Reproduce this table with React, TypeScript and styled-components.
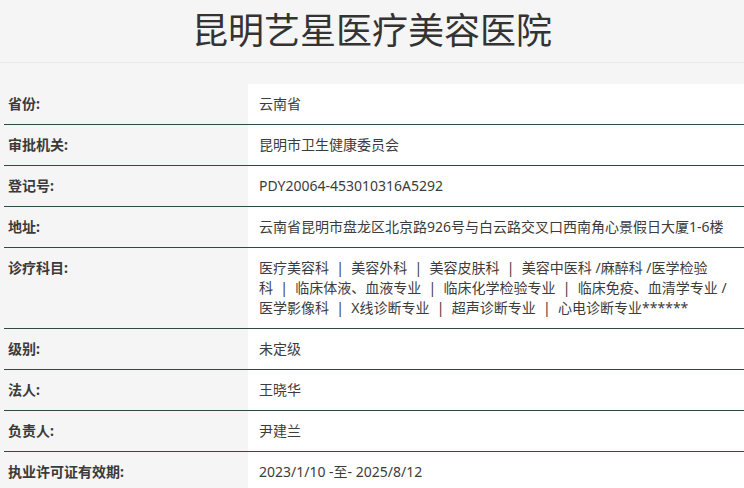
import React from "react";
import styled, { createGlobalStyle } from "styled-components";

const Global = createGlobalStyle`
  html, body { margin: 0; padding: 0; }
  body {
    background: #f5f5f5;
    font-family: "Noto Sans", "Noto Sans CJK SC", sans-serif;
    color: #333;
  }
`;

const Page = styled.div`
  width: 744px;
  height: 488px;
  overflow: hidden;
  background: #f5f5f5;
`;

const Header = styled.header`
  height: 62px;
  border-bottom: 1px solid #e9e9e9;
  display: flex;
  justify-content: center;
  align-items: flex-start;
`;

const Title = styled.h1`
  margin: 0;
  font-family: "Noto Sans CJK SC", sans-serif;
  font-weight: 400;
  font-size: 36px;
  line-height: 56px;
  color: #333;
  letter-spacing: 0;
`;

const Table = styled.div`
  margin: 21px 0 0 4px;
  display: flex;
  flex-direction: column;
`;

const Row = styled.div`
  display: grid;
  grid-template-columns: 244px 1fr;
  border-bottom: 1px solid #2e4a42;
`;

const Label = styled.div`
  background: #f5f5f5;
  padding: 10px 4px;
  font-size: 14px;
  line-height: 20px;
  font-weight: 700;
  color: #3a3a3a;
`;

const Value = styled.div`
  background: #fff;
  padding: 10px 11px;
  font-size: 14px;
  line-height: 20px;
  color: #3c3c3c;
  white-space: nowrap;
`;

const Line = styled.span`
  display: block;
`;

const rows: { label: string; value: string[] }[] = [
  { label: "省份:", value: ["云南省"] },
  { label: "审批机关:", value: ["昆明市卫生健康委员会"] },
  { label: "登记号:", value: ["PDY20064-453010316A5292"] },
  { label: "地址:", value: ["云南省昆明市盘龙区北京路926号与白云路交叉口西南角心景假日大厦1-6楼"] },
  {
    label: "诊疗科目:",
    value: [
      "医疗美容科 \u00a0|\u00a0 美容外科 \u00a0|\u00a0 美容皮肤科 \u00a0|\u00a0 美容中医科 /麻醉科 /医学检验",
      "科 \u00a0|\u00a0 临床体液、血液专业 \u00a0|\u00a0 临床化学检验专业 \u00a0|\u00a0 临床免疫、血清学专业 /",
      "医学影像科 \u00a0|\u00a0 X线诊断专业 \u00a0|\u00a0 超声诊断专业 \u00a0|\u00a0 心电诊断专业******",
    ],
  },
  { label: "级别:", value: ["未定级"] },
  { label: "法人:", value: ["王晓华"] },
  { label: "负责人:", value: ["尹建兰"] },
  { label: "执业许可证有效期:", value: ["2023/1/10 -至- 2025/8/12"] },
];

export default function App() {
  return (
    <Page>
      <Global />
      <Header>
        <Title>昆明艺星医疗美容医院</Title>
      </Header>
      <Table>
        {rows.map((r) => (
          <Row key={r.label}>
            <Label>{r.label}</Label>
            <Value>
              {r.value.map((v, i) => (
                <Line key={i}>{v}</Line>
              ))}
            </Value>
          </Row>
        ))}
      </Table>
    </Page>
  );
}
